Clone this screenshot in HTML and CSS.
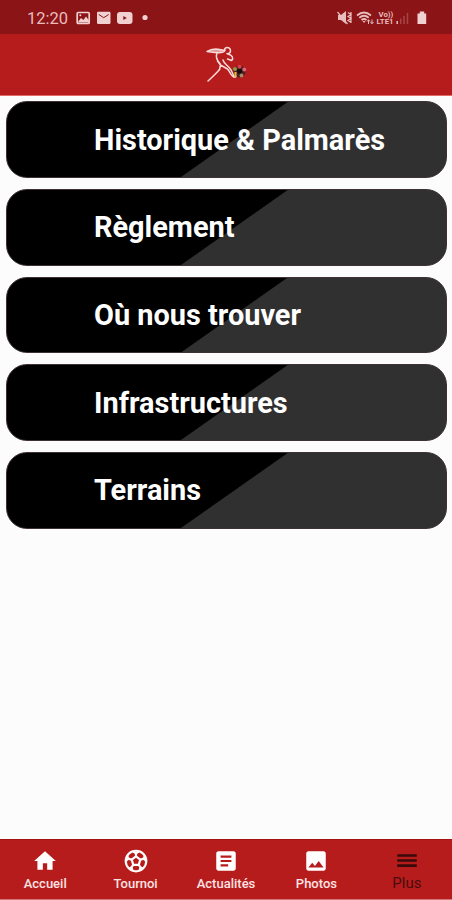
FILE: index.html
```html
<!DOCTYPE html>
<html lang="fr">
<head>
    <meta charset="UTF-8">
    <meta name="viewport" content="width=device-width, initial-scale=1.0">
    <title>Plus</title>
    <link rel="stylesheet" href="styles.css">
</head>
<body>
    <div class="status-bar">
        <span class="time">12:20</span>
        <svg class="status-left" width="76" height="16" viewBox="0 0 76 16">
            <!-- picture -->
            <rect x="1.2" y="2.5" width="12" height="11" rx="1" fill="none" stroke="#f0d0d0" stroke-width="1.7"/>
            <path d="M2 12l3-4 2.4 2 2.6-3.5 3 4v2H2z" fill="#f0d0d0"/>
            <circle cx="4.3" cy="5.3" r="1" fill="#f0d0d0"/>
            <!-- mail -->
            <rect x="21" y="1.8" width="13.5" height="12.2" rx="1.2" fill="#f0d0d0"/>
            <path d="M22.8 4.500l4.900 3.200L32.700 4.500" fill="none" stroke="#8a1416" stroke-width="1"/>
            <!-- video -->
            <rect x="41" y="2" width="15.500" height="12" rx="3" fill="#f0d0d0"/>
            <path d="M47.300 6v4l3.500-2z" fill="#8a1416"/>
            <circle cx="69" cy="7.500" r="2.600" fill="#f0d0d0"/>
        </svg>
        <svg class="status-right" width="94" height="18" viewBox="0 0 94 18">
            <!-- muted speaker -->
            <path d="M2 6h3l5-4v13l-5-4H2z" fill="#e8bcbc"/>
            <path d="M1.500 3l10 12M12 3.500l3 2-3 2 3 2-3 2 3 2M15 3v11" fill="none" stroke="#e8bcbc" stroke-width="1.200"/>
            <!-- wifi -->
            <path d="M21 6.500q7-6 14 0M23.300 8.800q4.700-4 9.400 0M25.500 11q2.500-2 5 0" fill="none" stroke="#e8bcbc" stroke-width="1.800"/>
            <path d="M26.500 12l1.500 2 1.500-2z" fill="#e8bcbc"/>
            <path d="M32.500 15v-4m-1.500 1.500l1.500-1.800 1.500 1.800M36 10.500v4m-1.500-1.500l1.500 1.800 1.500-1.800" fill="none" stroke="#e8bcbc" stroke-width="1"/>
            <text class="lte" x="42.500" y="7.800">Vo))</text>
            <text class="lte" x="40.500" y="15.300">LTE1</text>
            <!-- signal -->
            <path d="M61.200 15v-3" stroke="#e8bcbc" stroke-width="1.500"/>
            <path d="M64.700 15V9.500M68 15V7M71.500 15V4" stroke="#a84446" stroke-width="1.500"/>
            <!-- battery -->
            <path d="M81.500 4.500h2.300V2.500h4.400v2h2V15h-8.700z" fill="#f0d0d0"/>
        </svg>
    </div>

    <header class="header">
        <svg class="logo" width="42" height="38" viewBox="0 0 42 38">
            <g fill="none" stroke="#f6dada" stroke-width="1.500" stroke-linecap="round" stroke-linejoin="round">
                <path d="M2 5.500c3-2 7-2.800 11-2.300l7 1.300c-1 2-5 2.500-8 2.300-3 0-6-.8-10-1.300z" fill="#e2a0a0"/>
                <path d="M19.500 4.500c0-4 5.500-4 6 0 .3 2.500-2 3.500-3.500 3"/>
                <path d="M12 7c-1.500 4-.5 7 3 10.500M23 8c4 1 6 4 3.700 6.500l-4.200-1.500"/>
                <path d="M14.500 23.500C11 28 7 31 3 35"/>
                <path d="M12.500 15l3 4 7 4c3 3 4 9 8 8l2-3M18 14c1 4 5 5 8 10l3 6M15.500 19l-1 4.500"/>
            </g>
            <circle cx="34.500" cy="25.500" r="6" fill="#4a2520"/>
            <circle cx="34.500" cy="25" r="2.600" fill="#160c0c"/>
            <circle cx="30" cy="23" r="2" fill="#8d9a42"/>
            <circle cx="34.500" cy="20.800" r="2" fill="#e33b4d"/>
            <circle cx="39.300" cy="23.500" r="1.900" fill="#e0657a"/>
            <circle cx="36.500" cy="29.500" r="1.900" fill="#a9896a"/>
            <path d="M30.500 26v5" stroke="#edb33c" stroke-width="2.200"/>
        </svg>
    </header>

    <main class="menu">
        <a class="card">Historique &amp; Palmarès</a>
        <a class="card">Règlement</a>
        <a class="card">Où nous trouver</a>
        <a class="card">Infrastructures</a>
        <a class="card">Terrains</a>
    </main>

    <nav class="tabs">
        <a class="tab">
            <svg viewBox="0 0 24 24"><path d="M10 20v-6h4v6h5v-8h3L12 3 2 12h3v8z"/></svg>
            <span>Accueil</span>
        </a>
        <a class="tab">
            <svg viewBox="0 0 24 24">
                <circle cx="12" cy="12" r="9.500" fill="none" stroke="#fff" stroke-width="2"/>
                <path d="M12 7.800l4 3-1.500 4.700h-5L8 10.800z" fill="none" stroke="#fff" stroke-width="2"/>
                <path d="M12 8V5M16 10.800l3-1M14.500 15.500l2 2.700M9.500 15.500l-2 2.700M8 10.800l-3-1" stroke="#fff" stroke-width="2"/>
                <path d="M7.800 3.200L12 6.300l4.200-3.100zM19.500 6.500l-1.600 3.600 3.600 3.200zM19 18l-3.500-1-1.700 4.500zM5 18l3.500-1 1.700 4.500zM4.500 6.500l1.600 3.600-3.600 3.200z"/>
            </svg>
            <span>Tournoi</span>
        </a>
        <a class="tab">
            <svg viewBox="0 0 24 24"><path d="M19 3H5c-1.100 0-2 .9-2 2v14c0 1.100.9 2 2 2h14c1.100 0 2-.9 2-2V5c0-1.100-.9-2-2-2zm-5 14H7v-2h7v2zm3-4H7v-2h10v2zm0-4H7V7h10v2z"/></svg>
            <span>Actualités</span>
        </a>
        <a class="tab">
            <svg viewBox="0 0 24 24"><path d="M21 19V5c0-1.100-.9-2-2-2H5c-1.100 0-2 .9-2 2v14c0 1.100.9 2 2 2h14c1.100 0 2-.9 2-2zM8.500 13.500l2.500 3.010L14.500 12l4.500 6H5l3.500-4.500z"/></svg>
            <span>Photos</span>
        </a>
        <a class="tab active">
            <svg viewBox="0 0 24 24"><path d="M3 17.500h18v-2.400H3v2.400zm0-4.700h18v-2.400H3v2.400zm0-7.100v2.400h18V5.700H3z"/></svg>
            <span>Plus</span>
        </a>
    </nav>
</body>
</html>
```

FILE: styles.css
```css
* {
    box-sizing: border-box;
}
body {
    margin: 0;
    height: 900px;
    display: flex;
    flex-direction: column;
    font-family: Roboto, "Liberation Sans", sans-serif;
    background-color: #fbfcfb;
}
.status-bar {
    display: flex;
    align-items: center;
    height: 34px;
    padding: 2px 22.5px 0 27px;
    background-color: #8a1416;
}
.time {
    width: 49px;
    font-size: 16.5px;
    color: #e9bcbc;
}
.status-right {
    margin-left: auto;
}
.lte {
    font-size: 7.8px;
    font-weight: bold;
    fill: #e8bcbc;
}
.header {
    display: flex;
    justify-content: center;
    height: 62px;
    padding-top: 12px;
    background-color: #b71c1c;
    border-bottom: 1px solid #e36a6a;
}
.menu {
    flex: 1;
    display: flex;
    flex-direction: column;
    gap: 11px;
    padding: 5.3px 5px 0 6px;
}
.card {
    display: flex;
    align-items: center;
    height: 76.7px;
    padding: 0 0 0 87px;
    border: 1px solid #3d3131;
    border-radius: 21px;
    background: linear-gradient(144.9deg, #000 calc(50% + 4px), #303030 calc(50% + 5px));
    color: #fff;
    font-size: 28.9px;
    font-weight: bold;
}
.tabs {
    display: flex;
    height: 61px;
    background-color: #b71c1c;
    border-top: 1px solid #a31313;
    border-bottom: 1px solid #d67676;
}
.tab {
    flex: 1;
    display: flex;
    flex-direction: column;
    align-items: center;
    padding-top: 8px;
    color: #fbe3e3;
    font-size: 13px;
    font-weight: 500;
    line-height: 16px;
}
.tab svg {
    width: 26px;
    height: 26px;
    margin-bottom: 2px;
    fill: #fff;
}
.active {
    color: #4a0c0c;
    font-size: 15px;
    font-weight: normal;
}
.active svg {
    margin-bottom: 1px;
    fill: #3a0a0a;
}
```
